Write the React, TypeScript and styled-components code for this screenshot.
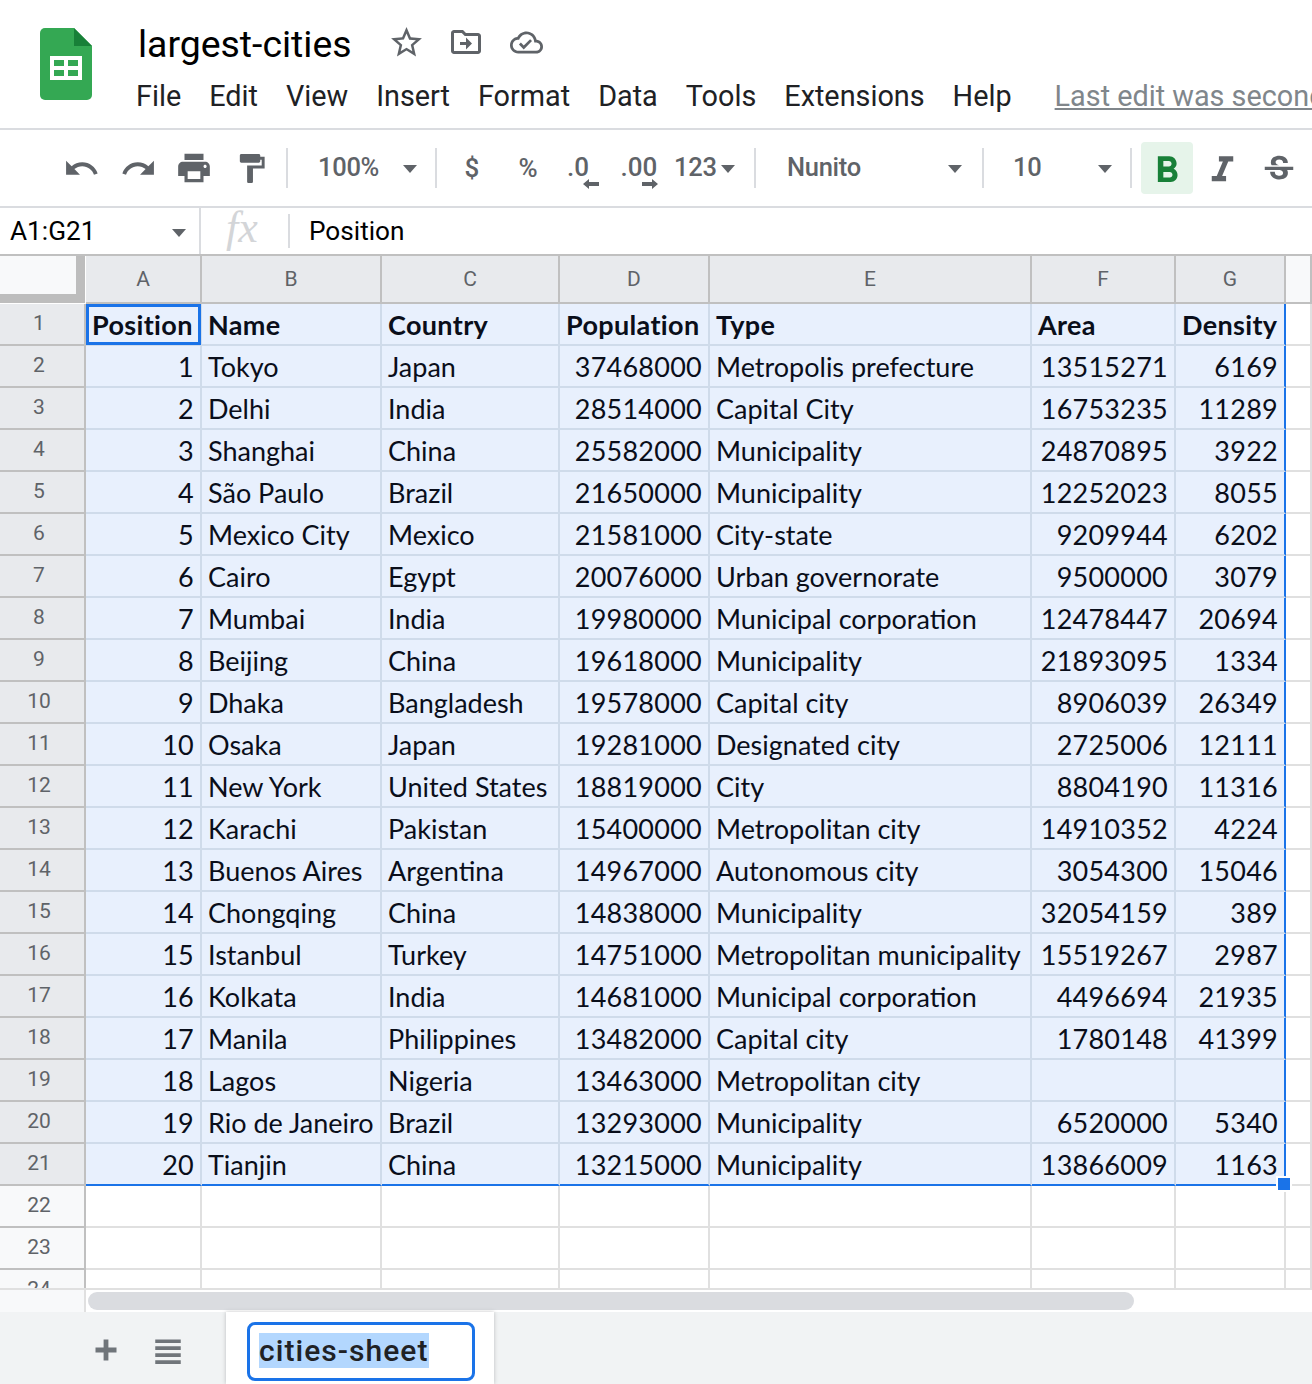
import { Fragment } from "react";
import styled, { createGlobalStyle } from "styled-components";

const GlobalStyle = createGlobalStyle`
  html, body {
    margin: 0;
    padding: 0;
    width: 1312px;
    height: 1384px;
    overflow: hidden;
    background: #fff;
    font-family: Roboto, sans-serif;
  }
`;

const COLUMNS = ["A", "B", "C", "D", "E", "F", "G"];
const ALIGN = ["r", "l", "l", "r", "l", "r", "r"];

const ROWS: string[][] = [
  ["Position", "Name", "Country", "Population", "Type", "Area", "Density"],
  ["1", "Tokyo", "Japan", "37468000", "Metropolis prefecture", "13515271", "6169"],
  ["2", "Delhi", "India", "28514000", "Capital City", "16753235", "11289"],
  ["3", "Shanghai", "China", "25582000", "Municipality", "24870895", "3922"],
  ["4", "São Paulo", "Brazil", "21650000", "Municipality", "12252023", "8055"],
  ["5", "Mexico City", "Mexico", "21581000", "City-state", "9209944", "6202"],
  ["6", "Cairo", "Egypt", "20076000", "Urban governorate", "9500000", "3079"],
  ["7", "Mumbai", "India", "19980000", "Municipal corporation", "12478447", "20694"],
  ["8", "Beijing", "China", "19618000", "Municipality", "21893095", "1334"],
  ["9", "Dhaka", "Bangladesh", "19578000", "Capital city", "8906039", "26349"],
  ["10", "Osaka", "Japan", "19281000", "Designated city", "2725006", "12111"],
  ["11", "New York", "United States", "18819000", "City", "8804190", "11316"],
  ["12", "Karachi", "Pakistan", "15400000", "Metropolitan city", "14910352", "4224"],
  ["13", "Buenos Aires", "Argentina", "14967000", "Autonomous city", "3054300", "15046"],
  ["14", "Chongqing", "China", "14838000", "Municipality", "32054159", "389"],
  ["15", "Istanbul", "Turkey", "14751000", "Metropolitan municipality", "15519267", "2987"],
  ["16", "Kolkata", "India", "14681000", "Municipal corporation", "4496694", "21935"],
  ["17", "Manila", "Philippines", "13482000", "Capital city", "1780148", "41399"],
  ["18", "Lagos", "Nigeria", "13463000", "Metropolitan city", "", ""],
  ["19", "Rio de Janeiro", "Brazil", "13293000", "Municipality", "6520000", "5340"],
  ["20", "Tianjin", "China", "13215000", "Municipality", "13866009", "1163"],
];

const MENU = ["File", "Edit", "View", "Insert", "Format", "Data", "Tools", "Extensions", "Help"];

const Page = styled.div`
  width: 1312px;
  height: 1384px;
  display: flex;
  flex-direction: column;
  overflow: hidden;
`;

const Header = styled.header`
  height: 128px;
  flex: none;
  display: flex;
  border-bottom: 2px solid #dadce0;
  white-space: nowrap;
`;

const LogoWrap = styled.div`
  padding: 28px 44px 0 40px;
  flex: none;
`;

const TitleColumn = styled.div`
  display: flex;
  flex-direction: column;
`;

const TitleRow = styled.div`
  height: 62px;
  padding-top: 26px;
  display: flex;
  align-items: center;
  box-sizing: border-box;
`;

const Title = styled.div`
  font-size: 37.4px;
  color: #000;
  margin: 0 36px 0 2px;
`;

const TitleIcon = styled.svg<{ $size: number; $gap: number }>`
  width: ${(p) => p.$size}px;
  height: ${(p) => p.$size}px;
  fill: #5f6368;
  margin: -4px ${(p) => p.$gap}px 0 0;
  flex: none;
`;

const MenuRow = styled.nav`
  display: flex;
  gap: 28px;
  align-items: center;
  height: 36px;
  margin-top: 16px;
`;

const MenuItem = styled.span`
  font-size: 28.8px;
  color: #202124;
`;

const LastEdit = styled.span`
  font-size: 28.8px;
  color: #80868b;
  text-decoration: underline;
  margin-left: 15px;
`;

const Toolbar = styled.div`
  height: 76px;
  flex: none;
  display: flex;
  align-items: center;
  padding-left: 53px;
  border-bottom: 2px solid #dadce0;
  box-sizing: content-box;
`;

const ToolButton = styled.div<{ $w?: number; $active?: boolean; $nudge?: number }>`
  width: ${(p) => p.$w ?? 57}px;
  height: 52px;
  flex: none;
  box-sizing: border-box;
  padding-top: ${(p) => p.$nudge ?? 0}px;
  display: flex;
  align-items: center;
  justify-content: center;
  border-radius: 4px;
  background: ${(p) => (p.$active ? "#e6f4ea" : "transparent")};
  color: #5f6368;
  font-size: 26px;
  font-weight: 500;
  position: relative;
`;

const ToolIcon = styled.svg<{ $size?: number; $fill?: string }>`
  width: ${(p) => p.$size ?? 40}px;
  height: ${(p) => p.$size ?? 40}px;
  fill: ${(p) => p.$fill ?? "#5f6368"};
  flex: none;
`;

const Divider = styled.div<{ $before?: number; $after?: number }>`
  width: 2px;
  height: 40px;
  flex: none;
  background: #dadce0;
  margin: 0 ${(p) => p.$after ?? 0}px 0 ${(p) => p.$before ?? 0}px;
`;

const Select = styled.div<{ $w: number; $pad: number; $end: number }>`
  width: ${(p) => p.$w}px;
  flex: none;
  display: flex;
  align-items: center;
  justify-content: space-between;
  box-sizing: border-box;
  padding: 0 ${(p) => p.$end}px 2px ${(p) => p.$pad}px;
  font-size: 25.5px;
  letter-spacing: -0.3px;
  font-weight: 500;
  color: #5f6368;
`;

const Caret = styled.span`
  width: 0;
  height: 0;
  flex: none;
  border-left: 7.5px solid transparent;
  border-right: 7.5px solid transparent;
  border-top: 8px solid #5f6368;
  margin-top: 3px;
`;

const DecimalGlyph = styled.span<{ $shift?: number }>`
  font-size: 26px;
  font-weight: 500;
  color: #5f6368;
  margin: -3px ${(p) => p.$shift ?? 0}px 0 0;
`;

const DecimalArrow = styled.svg<{ $right: number }>`
  position: absolute;
  right: ${(p) => p.$right}px;
  bottom: 4px;
  width: 16px;
  height: 12px;
  fill: #5f6368;
`;

const FormulaBar = styled.div`
  height: 46px;
  flex: none;
  display: flex;
  align-items: center;
  font-size: 26.2px;
  color: #000;
`;

const NameBox = styled.div`
  width: 201px;
  height: 100%;
  flex: none;
  box-sizing: border-box;
  padding: 0 13px 0 10px;
  display: flex;
  align-items: center;
  justify-content: space-between;
  border-right: 2px solid #dadce0;
`;

const FxLabel = styled.div`
  width: 87px;
  flex: none;
  padding-left: 25px;
  box-sizing: border-box;
  font-family: "Liberation Serif", serif;
  font-style: italic;
  font-size: 44px;
  color: #d3d5d8;
  line-height: 40px;
  height: 46px;
`;

const FormulaDivider = styled.div`
  width: 2px;
  height: 34px;
  flex: none;
  background: #dadce0;
  margin-right: 19px;
`;

const Sheet = styled.div`
  flex: 1;
  min-height: 0;
  overflow: hidden;
  border-top: 2px solid #c0c0c0;
`;

const Grid = styled.div`
  display: grid;
  grid-template-columns: 86px 116px 180px 178px 150px 322px 144px 110px 26px;
  grid-auto-rows: 42px;
  grid-template-rows: 48px;
`;

const Corner = styled.div`
  background: #f8f9fa;
  box-sizing: border-box;
  border-right: 9px solid #bdbdbd;
  border-bottom: 9px solid #bdbdbd;
  margin-right: 1px;
  margin-bottom: 1px;
`;

const ColHead = styled.div<{ $selected?: boolean }>`
  box-sizing: border-box;
  background: ${(p) => (p.$selected ? "#e8eaed" : "#f8f9fa")};
  border-right: 2px solid #c0c0c0;
  border-bottom: 2px solid #c0c0c0;
  display: flex;
  align-items: center;
  justify-content: center;
  font-size: 21px;
  color: #5f6368;
`;

const RowHead = styled.div<{ $selected?: boolean }>`
  box-sizing: border-box;
  background: ${(p) => (p.$selected ? "#e8eaed" : "#f8f9fa")};
  border-right: 2px solid #c0c0c0;
  border-bottom: 2px solid #c0c0c0;
  display: flex;
  align-items: center;
  justify-content: center;
  font-size: 21px;
  color: #5f6368;
  padding: 0 6px 2px 0;
`;

const Cell = styled.div<{
  $selected?: boolean;
  $align?: string;
  $bold?: boolean;
  $lastCol?: boolean;
  $lastRow?: boolean;
  $active?: boolean;
}>`
  box-sizing: border-box;
  position: relative;
  white-space: nowrap;
  overflow: visible;
  display: flex;
  align-items: center;
  justify-content: ${(p) => (p.$align === "r" ? "flex-end" : "flex-start")};
  padding: 0 ${(p) => (p.$align === "r" ? 6 : 0)}px 0 ${(p) => (p.$align === "r" ? 0 : 6)}px;
  font-family: Lato, sans-serif;
  font-size: 27px;
  font-weight: ${(p) => (p.$bold ? 700 : 400)};
  letter-spacing: ${(p) => (p.$bold ? 0.35 : p.$align === "r" ? 0.25 : 0)}px;
  color: #0a0e1a;
  background: ${(p) => (p.$selected ? "#e8f0fd" : "#fff")};
  border-right: 2px solid ${(p) => (p.$lastCol ? "#1a73e8" : p.$selected ? "#cfdbea" : "#e0e0e0")};
  border-bottom: 2px solid ${(p) => (p.$lastRow ? "#1a73e8" : p.$selected ? "#cfdbea" : "#e0e0e0")};
  ${(p) =>
    p.$active &&
    `&::after {
      content: "";
      position: absolute;
      inset: 0 -1px -1px 0;
      border: 3px solid #1a73e8;
    }`}
`;

const FillHandle = styled.span`
  position: absolute;
  right: -6px;
  bottom: -6px;
  width: 12px;
  height: 12px;
  background: #1a73e8;
  outline: 2px solid #fff;
  z-index: 2;
`;

const ScrollRow = styled.div`
  height: 24px;
  flex: none;
  display: flex;
  border-top: 2px solid #e0e0e0;
  box-sizing: border-box;
`;

const ScrollGutter = styled.div`
  width: 86px;
  flex: none;
  box-sizing: border-box;
  background: #f8f9fa;
  border-right: 2px solid #e0e0e0;
`;

const ScrollThumb = styled.div`
  width: 1046px;
  height: 18px;
  margin: 2px 0 0 2px;
  border-radius: 9px;
  background: #dadce0;
`;

const TabBar = styled.div`
  height: 72px;
  flex: none;
  display: flex;
  background: #f1f3f4;
  padding-left: 88px;
`;

const TabAction = styled.div<{ $w: number }>`
  width: ${(p) => p.$w}px;
  height: 76px;
  flex: none;
  display: flex;
  align-items: center;
  justify-content: center;
`;

const Tab = styled.div`
  width: 268px;
  flex: none;
  box-sizing: border-box;
  background: #fff;
  box-shadow: 0 0 4px rgba(60, 64, 67, 0.3);
  padding: 10px 0 0 21px;
`;

const TabInput = styled.div`
  width: 228px;
  height: 59px;
  box-sizing: border-box;
  border: 3px solid #1a73e8;
  border-radius: 8px;
  padding: 0 0 2px 9px;
  display: flex;
  align-items: center;
`;

const TabLabel = styled.span`
  background: #b3d7fe;
  font-size: 30px;
  font-weight: 500;
  letter-spacing: 1.05px;
  color: #202124;
  line-height: 35px;
`;

const Logo = () => (
  <svg width="52" height="72" viewBox="0 0 52 72">
    <path d="M5 0h29l18 18v49a5 5 0 0 1-5 5H5a5 5 0 0 1-5-5V5a5 5 0 0 1 5-5z" fill="#34a853" />
    <path d="M34 0l18 18H34z" fill="#188038" />
    <path d="M10 28h32v24H10z M14 32v6h10v-6z M28 32v6h10v-6z M14 42v6h10v-6z M28 42v6h10v-6z" fill="#fff" fillRule="evenodd" />
  </svg>
);

const Icon = ({ d, size, fill }: { d: string; size?: number; fill?: string }) => (
  <ToolIcon viewBox="0 0 24 24" $size={size} $fill={fill}>
    <path d={d} />
  </ToolIcon>
);

const ICONS = {
  undo: "M12.5 8c-2.65 0-5.05.99-6.9 2.6L2 7v9h9l-3.62-3.62c1.39-1.16 3.16-1.88 5.12-1.88 3.54 0 6.55 2.31 7.6 5.5l2.37-.78C21.08 11.03 17.15 8 12.5 8z",
  redo: "M18.4 10.6C16.55 8.99 14.15 8 11.5 8c-4.65 0-8.58 3.03-9.96 7.22L3.9 16c1.05-3.19 4.05-5.5 7.6-5.5 1.95 0 3.73.72 5.12 1.88L13 16h9V7l-3.6 3.6z",
  print: "M19 8H5c-1.66 0-3 1.34-3 3v6h4v4h12v-4h4v-6c0-1.66-1.34-3-3-3zm-3 11H8v-5h8v5zm3-7c-.55 0-1-.45-1-1s.45-1 1-1 1 .45 1 1-.45 1-1 1zm-1-9H6v4h12V3z",
  paint: "M18 4V3c0-.55-.45-1-1-1H5c-.55 0-1 .45-1 1v4c0 .55.45 1 1 1h12c.55 0 1-.45 1-1V6h1v4H9v11c0 .55.45 1 1 1h2c.55 0 1-.45 1-1v-9h8V4h-3z",
  bold: "M15.6 10.79c.97-.67 1.65-1.77 1.65-2.79 0-2.26-1.75-4-4-4H7v14h7.04c2.09 0 3.71-1.7 3.71-3.79 0-1.52-.86-2.82-2.15-3.42zM10 6.5h3c.83 0 1.5.67 1.5 1.5s-.67 1.5-1.5 1.5h-3v-3zm3.5 9H10v-3h3.5c.83 0 1.5.67 1.5 1.5s-.67 1.5-1.5 1.5z",
  italic: "M10 4v3h2.21l-3.42 8H6v3h8v-3h-2.21l3.42-8H18V4z",
  strike: "M6.85 7.08C6.85 4.37 9.45 3 12.24 3c1.64 0 3 .49 3.9 1.28.77.65 1.46 1.73 1.46 3.24h-3.01c0-.31-.05-.59-.15-.85-.29-.86-1.2-1.28-2.25-1.28-1.86 0-2.34 1.02-2.34 1.7 0 .48.25.88.74 1.21.38.25.77.48 1.41.7H7.39c-.21-.34-.54-.89-.54-1.92zM21 12v-2H3v2h9.62c1.15.45 1.96.75 1.96 1.97 0 1-.81 1.67-2.28 1.67-1.54 0-2.93-.54-2.93-2.51H6.4c0 .55.08 1.13.24 1.58.81 2.29 3.29 3.3 5.67 3.3 2.27 0 5.3-.89 5.3-4.05 0-.3-.01-1.16-.48-1.96H21z",
  star: "M22 9.24l-7.19-.62L12 2 9.19 8.63 2 9.24l5.46 4.73L5.82 21 12 17.27 18.18 21l-1.63-7.03L22 9.24zM12 15.4l-3.76 2.27 1-4.28-3.32-2.88 4.38-.38L12 6.1l1.71 4.04 4.38.38-3.32 2.88 1 4.28L12 15.4z",
  move: "M20 6h-8l-2-2H4c-1.1 0-2 .9-2 2v12c0 1.1.9 2 2 2h16c1.1 0 2-.9 2-2V8c0-1.1-.9-2-2-2zm0 12H4V6h5.17l2 2H20v10zM12 9l4 4-4 4v-3H8v-2h4V9z",
  cloud: "M19.35 10.04C18.67 6.59 15.64 4 12 4 9.11 4 6.6 5.64 5.35 8.04 2.34 8.36 0 10.91 0 14c0 3.31 2.69 6 6 6h13c2.76 0 5-2.24 5-5 0-2.64-2.05-4.78-4.65-4.96zM19 18H6c-2.21 0-4-1.79-4-4 0-2.05 1.53-3.76 3.56-3.97l1.07-.11.5-.95C8.08 7.14 9.94 6 12 6c2.62 0 4.88 1.86 5.39 4.43l.3 1.5 1.53.11c1.56.1 2.78 1.41 2.78 2.96 0 1.65-1.35 3-3 3zm-9-3.82l-2.09-2.09L6.5 13.5 10 17l6.01-6.01-1.41-1.41z",
  plus: "M19 13.6h-5.4V19h-3.2v-5.4H5v-3.2h5.4V5h3.2v5.4H19z",
  lines: "M3 4.5h18v2.6H3zM3 9.4h18V12H3zM3 14.3h18v2.6H3zM3 19.2h18v2.6H3z",
};

const App = () => {
  return (
    <Page>
      <GlobalStyle />
      <Header>
        <LogoWrap>
          <Logo />
        </LogoWrap>
        <TitleColumn>
          <TitleRow>
            <Title>largest-cities</Title>
            <TitleIcon viewBox="0 0 24 24" $size={37} $gap={23}><path d={ICONS.star} /></TitleIcon>
            <TitleIcon viewBox="0 0 24 24" $size={36} $gap={26}><path d={ICONS.move} /></TitleIcon>
            <TitleIcon viewBox="0 0 24 24" $size={33} $gap={0}><path d={ICONS.cloud} /></TitleIcon>
          </TitleRow>
          <MenuRow>
            {MENU.map((m) => (
              <MenuItem key={m}>{m}</MenuItem>
            ))}
            <LastEdit>Last edit was seconds ago</LastEdit>
          </MenuRow>
        </TitleColumn>
      </Header>

      <Toolbar>
        <ToolButton><Icon d={ICONS.undo} size={37} /></ToolButton>
        <ToolButton $w={56}><Icon d={ICONS.redo} size={37} /></ToolButton>
        <ToolButton $w={55}><Icon d={ICONS.print} size={38} /></ToolButton>
        <ToolButton $w={60}><Icon d={ICONS.paint} size={35} /></ToolButton>
        <Divider $before={5} $after={5} />
        <Select $w={142} $pad={25} $end={18}>100%<Caret /></Select>
        <Divider />
        <ToolButton $w={70}>$</ToolButton>
        <ToolButton $w={42}>%</ToolButton>
        <ToolButton $w={70}>
          <DecimalGlyph $shift={12}>.0</DecimalGlyph>
          <DecimalArrow $right={20} viewBox="0 0 16 12"><path d="M0 6l6-5v3h10v4H6v3z" /></DecimalArrow>
        </ToolButton>
        <ToolButton $w={40}>
          <DecimalGlyph>.00</DecimalGlyph>
          <DecimalArrow $right={1} viewBox="0 0 16 12"><path d="M16 6l-6-5v3H0v4h10v3z" /></DecimalArrow>
        </ToolButton>
        <Select $w={95} $pad={15} $end={19}>123<Caret /></Select>
        <Divider />
        <Select $w={226} $pad={31} $end={20}>Nunito<Caret /></Select>
        <Divider />
        <Select $w={146} $pad={29} $end={18}>10<Caret /></Select>
        <Divider $after={9} />
        <ToolButton $w={52} $active $nudge={5}><Icon d={ICONS.bold} size={44} fill="#188038" /></ToolButton>
        <ToolButton $w={58} $nudge={4}><Icon d={ICONS.italic} size={43} /></ToolButton>
        <ToolButton $w={56} $nudge={4}><Icon d={ICONS.strike} size={38} /></ToolButton>
      </Toolbar>

      <FormulaBar>
        <NameBox>A1:G21<Caret /></NameBox>
        <FxLabel>fx</FxLabel>
        <FormulaDivider />
        Position
      </FormulaBar>

      <Sheet>
        <Grid>
          <Corner />
          {COLUMNS.map((c) => (
            <ColHead key={c} $selected>{c}</ColHead>
          ))}
          <ColHead />
          {ROWS.map((row, r) => (
            <Fragment key={r}>
              <RowHead $selected>{r + 1}</RowHead>
              {row.map((v, c) => (
                <Cell
                  key={c}
                  $selected
                  $align={r === 0 ? "l" : ALIGN[c]}
                  $bold={r === 0}
                  $active={r === 0 && c === 0}
                  $lastCol={c === 6}
                  $lastRow={r === ROWS.length - 1}
                >
                  {v}
                  {r === ROWS.length - 1 && c === 6 && <FillHandle />}
                </Cell>
              ))}
              <Cell />
            </Fragment>
          ))}
          {[22, 23, 24].map((n) => (
            <Fragment key={n}>
              <RowHead>{n}</RowHead>
              {COLUMNS.map((c) => (
                <Cell key={c} />
              ))}
              <Cell />
            </Fragment>
          ))}
        </Grid>
      </Sheet>

      <ScrollRow>
        <ScrollGutter />
        <ScrollThumb />
      </ScrollRow>

      <TabBar>
        <TabAction $w={36}><Icon d={ICONS.plus} size={36} fill="#70757a" /></TabAction>
        <TabAction $w={26} />
        <TabAction $w={36}><Icon d={ICONS.lines} size={34} fill="#70757a" /></TabAction>
        <TabAction $w={40} />
        <Tab>
          <TabInput>
            <TabLabel>cities-sheet</TabLabel>
          </TabInput>
        </Tab>
      </TabBar>
    </Page>
  );
};

export default App;
